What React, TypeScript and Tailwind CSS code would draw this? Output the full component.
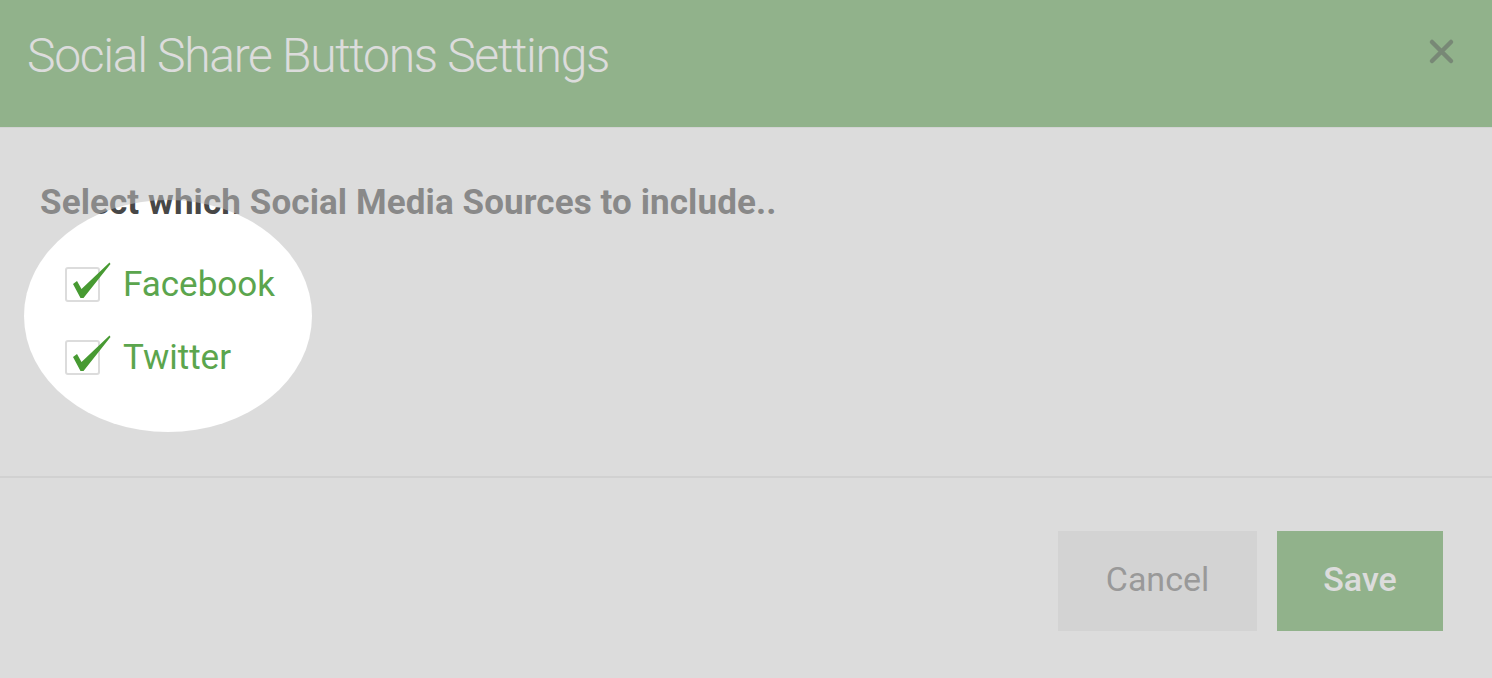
import React from 'react';

function Tick() {
  return (
    <svg className="absolute left-[6px] top-[-7px] w-[38px] h-[37px]" viewBox="0 0 38 37">
      <path d="M0 22 L4 19 L8.5 27 L36.5 0.5 L37.5 2 L10.5 36 L7.5 36 Z" fill="#479a32" />
    </svg>
  );
}

function Option({ label }: { label: string }) {
  return (
    <label className="flex items-center h-[36px]">
      <span className="relative w-[35px] h-[35px] border-2 border-[#dcdcdc] rounded-[3px] bg-white">
        <Tick />
      </span>
      <span className="ml-[23px] text-[35px] leading-none text-[#5ba54d]">{label}</span>
    </label>
  );
}

export default function App() {
  return (
    <div className="relative w-[1492px] h-[678px] overflow-hidden bg-white font-['Roboto',sans-serif]">
      {/* Header */}
      <div className="h-[128px] bg-[#59a34c] flex items-start justify-between pl-[27px] pr-[37px] border-b border-[#e8ecea]">
        <h1 className="pt-[32px] text-[48px] leading-none font-light text-white tracking-[-1.3px]">
          Social Share Buttons Settings
        </h1>
        <svg className="mt-[38px] w-[27px] h-[27px]" viewBox="0 0 27 27">
          <path d="M4 4 L23 23 M23 4 L4 23" stroke="#22461d" strokeWidth="4.5" strokeLinecap="round" />
        </svg>
      </div>

      {/* Body */}
      <div className="h-[350px] pt-[57px] pl-[40px] border-b-2 border-[#e6e6e6]">
        <p className="text-[35px] leading-none font-bold text-[#474747] tracking-[0.1px]">
          Select which Social Media Sources to include..
        </p>
        <div className="mt-[46px] pl-[25px] flex flex-col gap-[37px]">
          <Option label="Facebook" />
          <Option label="Twitter" />
        </div>
      </div>

      {/* Footer */}
      <div className="flex justify-end gap-[20px] pt-[53px] pr-[49px]">
        <button className="w-[199px] h-[100px] pb-[5px] bg-[#ececec] text-[34px] leading-none text-[#6b6b6b]">Cancel</button>
        <button className="w-[166px] h-[100px] pb-[5px] bg-[#59a34c] text-[34px] leading-none font-medium text-white">Save</button>
      </div>

      {/* Spotlight overlay */}
      <div className="pointer-events-none absolute left-[24px] top-[200px] w-[288px] h-[232px] rounded-[50%] shadow-[0_0_0_3000px_rgba(191,191,191,0.55)]" />
    </div>
  );
}
